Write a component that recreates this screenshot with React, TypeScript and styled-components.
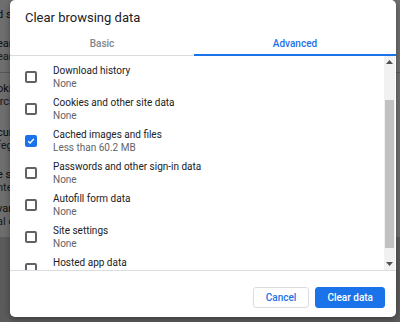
import React from 'react';
import styled, { createGlobalStyle, css } from 'styled-components';

const GlobalStyle = createGlobalStyle`
	html, body {
		margin: 0;
		padding: 0;
		background: #d2d2d2;
		font-family: Roboto, 'Liberation Sans', Arial, sans-serif;
	}
`;

const Screen = styled.div`
	position: relative;
	width: 400px;
	height: 322px;
	overflow: hidden;
	background: #d2d2d2;
`;

// the settings page that sits behind the dialog, only its left strip shows
const PageCard = styled.div`
	margin-left: -3px;
	width: 480px;
	padding-bottom: 8px;
	background: #ffffff;
	display: flex;
	flex-direction: column;
`;

const PageRow = styled.div<{ $border?: boolean; $height?: number }>`
	display: flex;
	flex-direction: column;
	justify-content: center;
	height: ${(p) => p.$height || 40}px;
	box-sizing: border-box;
	${(p) =>
		p.$border &&
		css`
			border-top: 1px solid #c8c8c8;
		`}
`;

const PageTitle = styled.span`
	font-size: 11px;
	color: #202124;
	line-height: 13px;
	white-space: nowrap;
`;

const PageSub = styled.span`
	font-size: 11px;
	color: #3c4043;
	line-height: 13px;
	white-space: nowrap;
`;

const Backdrop = styled.div`
	position: absolute;
	inset: 0;
	background: rgba(0, 0, 0, 0.57);
`;

const Dialog = styled.div`
	position: absolute;
	left: 10px;
	top: 0;
	width: 386px;
	height: 317px;
	background: #ffffff;
	border-radius: 5px;
	box-shadow: 0 2px 6px rgba(0, 0, 0, 0.35);
	display: flex;
	flex-direction: column;
	overflow: hidden;
`;

const DialogTitle = styled.div`
	height: 30px;
	padding: 4px 0 0 15px;
	box-sizing: border-box;
	display: flex;
	align-items: center;
	font-size: 13px;
	color: #202124;
`;

const Tabs = styled.div`
	display: flex;
	height: 25px;
	border-bottom: 1px solid #dadce0;
`;

const Tab = styled.div<{ $active?: boolean; $width?: number }>`
	${(p) => (p.$width ? `width: ${p.$width}px;` : 'flex: 1;')}
	display: flex;
	align-items: center;
	justify-content: center;
	font-size: 10px;
	font-weight: 500;
	color: ${(p) => (p.$active ? '#1a73e8' : '#80868b')};
	box-shadow: ${(p) => (p.$active ? 'inset 0 -2px 0 #1a73e8' : 'none')};
	margin-bottom: -1px;
`;

const Body = styled.div`
	flex: 1;
	display: flex;
	min-height: 0;
	border-bottom: 1px solid #dadce0;
`;

const List = styled.div`
	flex: 1;
	overflow: hidden;
	padding: 5px 0 0 15px;
`;

const Item = styled.div`
	display: flex;
	align-items: center;
	height: 32px;
`;

const Box = styled.span<{ $checked?: boolean }>`
	width: 12px;
	height: 12px;
	box-sizing: border-box;
	border-radius: 2px;
	border: 2px solid ${(p) => (p.$checked ? '#1a73e8' : '#5f6368')};
	background: ${(p) => (p.$checked ? '#1a73e8' : '#ffffff')};
	display: flex;
	align-items: center;
	justify-content: center;
	flex-shrink: 0;
`;

const ItemText = styled.div`
	display: flex;
	flex-direction: column;
	margin-left: 16px;
`;

const ItemTitle = styled.span`
	font-size: 10px;
	line-height: 13px;
	color: #202124;
`;

const ItemSub = styled.span`
	font-size: 10px;
	line-height: 13px;
	color: #5f6368;
`;

const Track = styled.div`
	width: 11px;
	margin-right: 1px;
	background: #f1f1f1;
	display: flex;
	flex-direction: column;
`;

const Arrow = styled.div`
	height: 12px;
	display: flex;
	align-items: center;
	justify-content: center;
`;

const ThumbArea = styled.div`
	flex: 1;
	display: flex;
	flex-direction: column;
`;

const Thumb = styled.div`
	margin: 32px 1px 0 1px;
	height: 148px;
	background: #c1c1c1;
`;

const Footer = styled.div`
	flex: 0 0 46px;
	display: flex;
	align-items: center;
	justify-content: flex-end;
	gap: 6px;
	padding: 6px 11px 0 0;
	box-sizing: border-box;
`;

const Button = styled.button<{ $primary?: boolean }>`
	height: 21px;
	padding: 0 ${(p) => (p.$primary ? 11 : 12)}px;
	border-radius: 3px;
	font-family: Roboto, 'Liberation Sans', Arial, sans-serif;
	font-size: 10px;
	font-weight: 500;
	cursor: pointer;
	${(p) =>
		p.$primary
			? css`
					background: #1a73e8;
					color: #ffffff;
					border: 1px solid #1a73e8;
			  `
			: css`
					background: #ffffff;
					color: #1a73e8;
					border: 1px solid #dadce0;
			  `}
`;

const items = [
	{ title: 'Download history', sub: 'None' },
	{ title: 'Cookies and other site data', sub: 'None' },
	{ title: 'Cached images and files', sub: 'Less than 60.2 MB', checked: true },
	{ title: 'Passwords and other sign-in data', sub: 'None' },
	{ title: 'Autofill form data', sub: 'None' },
	{ title: 'Site settings', sub: 'None' },
	{ title: 'Hosted app data', sub: 'None' },
];

const pageRows = [
	{ title: 'd settings', sub: '', height: 28 },
	{ title: 'earch engine', sub: 'earch history', height: 44 },
	{ title: 'okies', sub: 'ircle data', height: 44, border: true },
	{ title: 'curity', sub: 'feguard', height: 45 },
	{ title: 'e settings', sub: 'ntent', height: 40 },
	{ title: 'vanced', sub: 'al options', height: 28 },
];

const Check = () => (
	<svg width="8" height="8" viewBox="0 0 8 8">
		<path d="M1.2 4.2 L3.1 6 L6.8 2" fill="none" stroke="#fff" strokeWidth="1.4" />
	</svg>
);

const Caret = ({ down }: { down?: boolean }) => (
	<svg width="7" height="4" viewBox="0 0 7 4">
		<path d={down ? 'M0 0 H7 L3.5 4 Z' : 'M0 4 H7 L3.5 0 Z'} fill="#505050" />
	</svg>
);

export default function App() {
	return (
		<Screen>
			<GlobalStyle />
			<PageCard>
				{pageRows.map((r, i) => (
					<PageRow key={i} $border={r.border} $height={r.height}>
						<PageTitle>{r.title}</PageTitle>
						{r.sub && <PageSub>{r.sub}</PageSub>}
					</PageRow>
				))}
			</PageCard>
			<Backdrop />
			<Dialog>
				<DialogTitle>Clear browsing data</DialogTitle>
				<Tabs>
					<Tab $width={184}>Basic</Tab>
					<Tab $active>Advanced</Tab>
				</Tabs>
				<Body>
					<List>
						{items.map((it) => (
							<Item key={it.title}>
								<Box $checked={it.checked}>{it.checked && <Check />}</Box>
								<ItemText>
									<ItemTitle>{it.title}</ItemTitle>
									<ItemSub>{it.sub}</ItemSub>
								</ItemText>
							</Item>
						))}
					</List>
					<Track>
						<Arrow>
							<Caret />
						</Arrow>
						<ThumbArea>
							<Thumb />
						</ThumbArea>
						<Arrow>
							<Caret down />
						</Arrow>
					</Track>
				</Body>
				<Footer>
					<Button>Cancel</Button>
					<Button $primary>Clear data</Button>
				</Footer>
			</Dialog>
		</Screen>
	);
}
